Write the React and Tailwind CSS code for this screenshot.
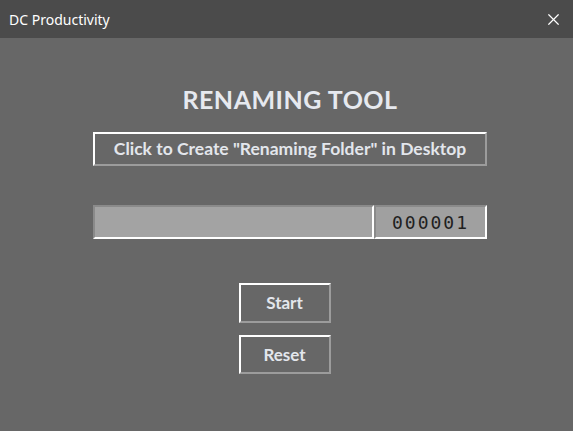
import { X } from "lucide-react";

export default function App() {
  return (
    <div className="w-[573px] h-[431px] flex flex-col bg-[#676767] overflow-hidden">
      {/* Title bar */}
      <div className="h-[38px] bg-[#4b4b4b] flex items-center justify-between pl-[9px] pr-[10px] shrink-0">
        <span className="text-[14px] text-white font-['Noto_Sans',sans-serif]">DC Productivity</span>
        <X className="w-[19px] h-[19px] text-white" strokeWidth={1.5} />
      </div>

      {/* Body */}
      <div className="flex flex-col items-center pl-[7px] font-['Lato',sans-serif]">
        <h1 className="mt-[46px] text-[25px] leading-[30px] font-bold text-[#e6e9ef] tracking-[0.5px]">
          RENAMING TOOL
        </h1>

        <button className="mt-[18px] w-[394px] h-[34px] bg-[#676767] border-t-2 border-l-2 border-white border-r-2 border-b-2 border-r-[#9c9c9c] border-b-[#9c9c9c] text-[17.5px] font-bold text-[#e3e6ec]">
          Click to Create "Renaming Folder" in Desktop
        </button>

        <div className="mt-[39px] flex w-[394px] h-[34px]">
          <div className="w-[281px] bg-[#a3a3a3] border-t-2 border-l-2 border-[#8a8a8a] border-r-2 border-b-2 border-r-white border-b-white" />
          <div className="flex-1 bg-[#a0a0a0] border-t-2 border-l-2 border-[#8a8a8a] border-r-2 border-b-2 border-r-white border-b-white flex items-center justify-center">
            <span className="text-[18px] font-['DejaVu_Sans_Mono',monospace] text-[#1f1f1f] tracking-[2px] font-light">000001</span>
          </div>
        </div>

        <div className="mt-[44px] -ml-[11px] flex flex-col gap-[12px]">
          <button className="w-[92px] h-[40px] bg-[#676767] border-t-2 border-l-2 border-white border-r-2 border-b-2 border-r-[#9c9c9c] border-b-[#9c9c9c] text-[17px] font-bold text-[#e3e6ec]">
            Start
          </button>
          <button className="w-[92px] h-[39px] bg-[#676767] border-t-2 border-l-2 border-white border-r-2 border-b-2 border-r-[#9c9c9c] border-b-[#9c9c9c] text-[17px] font-bold text-[#e3e6ec]">
            Reset
          </button>
        </div>
      </div>
    </div>
  );
}
